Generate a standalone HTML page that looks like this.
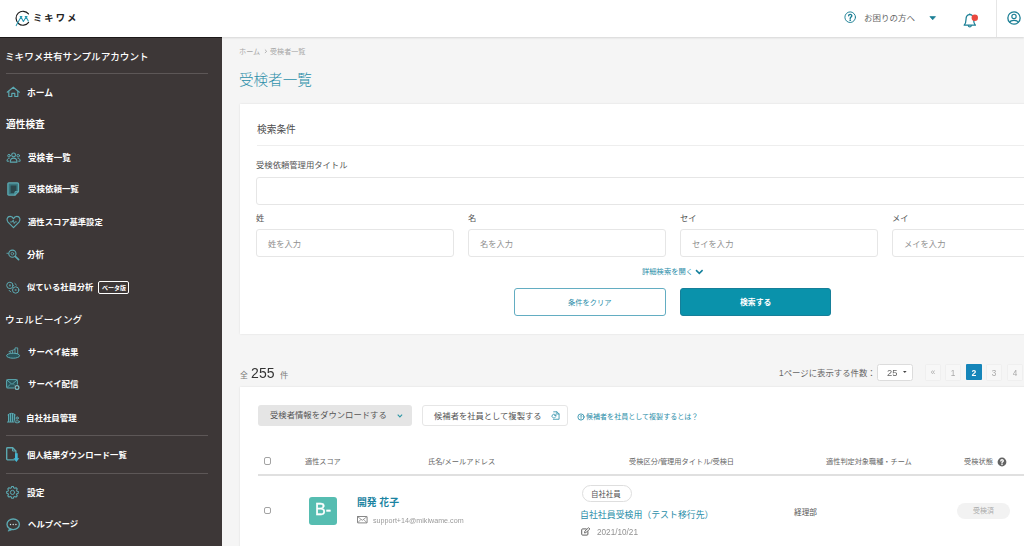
<!DOCTYPE html>
<html lang="ja">
<head>
<meta charset="utf-8">
<title>受検者一覧 | ミキワメ</title>
<style>
html,body{margin:0;padding:0}
body{position:relative;width:1024px;height:546px;overflow:hidden;background:#f5f5f5;font-family:"Liberation Sans","Noto Sans CJK JP",sans-serif;color:#555}
.b,.t,.l,.i{position:absolute;box-sizing:border-box}
.t{display:block;line-height:0;white-space:nowrap}
.t svg{display:block;fill:currentColor;overflow:visible}
.t svg text{font-family:"Liberation Sans","Noto Sans CJK JP",sans-serif;font-size:250px;font-weight:400;stroke:none}
.t svg text.fb{font-weight:700}
.t svg text.fm{font-weight:500}
.t svg text.fl{font-weight:300}
.i{display:block;overflow:visible}
.l{white-space:nowrap;will-change:transform}
header,aside,nav,main,section,ul,li,a,h1,h2,label,button,table,thead,tbody,tr,th,td{all:unset}
.card{background:#fff;box-shadow:0 0 2px rgba(0,0,0,.10)}
.inp{background:#fff;border:1px solid #e6e6e6;border-radius:3px}
.hr{background:#eeeeee}
.cb{background:#fff;border:1px solid #a3a3a3;border-radius:2px}
.pg{background:#f7f7f7;border:1px solid #efefef;border-radius:1.5px}
</style>
</head>
<body>
<header>
<div class="b" style="left:0.00px;top:0.00px;width:1024.00px;height:37.30px;background:#fff;box-shadow:0 1px 2px rgba(0,0,0,.13)"></div>
<a><svg class="i" style="left:0.00px;top:0.00px" width="40.00" height="37.00" viewBox="0 0 40 37"  aria-hidden="true"><path d="M28.62 22.34A6.95 6.95 0 1 1 28.48 13.97" fill="none" stroke="#1d1d1d" stroke-width="1.15" stroke-linecap="round"/><path d="M16.2 25.6L21 16.9L23.4 21.5L26.1 16.9L28.3 21" fill="none" stroke="#2698b2" stroke-width="1.05" stroke-linecap="round" stroke-linejoin="round"/><path d="M19.8 16.6H22.3M24.8 16.6H27.4" fill="none" stroke="#2698b2" stroke-width="1.3"/></svg><span class="t" style="left:32.63px;top:13.44px;color:#222"><svg width="45.47" height="9.32" viewBox="0 -220 1220 250"><text class="fb" x="0" y="0" letter-spacing="55">ミキワメ</text></svg></span></a>
<svg class="i" style="left:842.90px;top:9.80px;color:#1b7f95" width="14.40" height="14.40" viewBox="-7.2 -7.2 14.4 14.4"  aria-hidden="true"><circle r="5.3" fill="none" stroke="currentColor" stroke-width="0.95" stroke-linecap="round" stroke-linejoin="round" /><path d="M-1.55 -1.35C-1.55 -3.35 1.6 -3.35 1.6 -1.4C1.6 -0.2 0 -0.1 0 1.3" fill="none" stroke="currentColor" stroke-width="1.4" stroke-linecap="round" stroke-linejoin="round" /><circle cy="3" r=".85" fill="currentColor"/></svg><svg class="i" style="left:929.00px;top:16.00px;color:#1b7f95" width="8.00" height="5.00" viewBox="0 0 8 5"  aria-hidden="true"><path d="M0.9 0.6H6.5L3.7 3.8Z" fill="currentColor" stroke="currentColor" stroke-width=".7" stroke-linejoin="round"/></svg><svg class="i" style="left:963.00px;top:12.50px;color:#1b7f95" width="14.00" height="16.00" viewBox="0 0 14 16"  aria-hidden="true"><path d="M6.8 1.5C4.2 1.5 3 3.7 3 6.4C3 9.4 2.1 11.1 1.2 12.2H12.4C11.5 11.1 10.6 9.4 10.6 6.4C10.6 3.7 9.4 1.5 6.8 1.5Z" fill="none" stroke="currentColor" stroke-width="1.25" stroke-linecap="round" stroke-linejoin="round" /><path d="M5.3 12.7C5.5 14.3 8.1 14.3 8.3 12.7" fill="none" stroke="currentColor" stroke-width="1.2" stroke-linecap="round" stroke-linejoin="round" /><path d="M6.8 1.5V0.9" fill="none" stroke="currentColor" stroke-width="1.2" stroke-linecap="round" stroke-linejoin="round" /><circle cx="11.8" cy="4.7" r="3.2" fill="#e9483f"/></svg><svg class="i" style="left:1006.30px;top:10.10px;color:#1b7f95" width="16.00" height="16.00" viewBox="-8 -8 16 16"  aria-hidden="true"><circle r="6.15" fill="none" stroke="currentColor" stroke-width="1.3" stroke-linecap="round" stroke-linejoin="round" /><circle cy="-1.6" r="2.15" fill="none" stroke="currentColor" stroke-width="1.15" stroke-linecap="round" stroke-linejoin="round" /><path d="M-4.2 4.3C-3.4 1.7 3.4 1.7 4.2 4.3" fill="none" stroke="currentColor" stroke-width="1.15" stroke-linecap="round" stroke-linejoin="round" /></svg>
<a class="t" style="left:863.72px;top:14.05px;color:#666"><svg width="50.99" height="8.50" viewBox="0 -220 1500 250"><text x="0" y="0">お困りの方へ</text></svg></a>
<div class="b" style="left:996.00px;top:0.00px;width:1.00px;height:37.30px;background:#e6e6e6"></div>
</header>
<aside><nav>
<div class="b" style="left:0.00px;top:37.30px;width:222.00px;height:508.70px;background:#3d3737;border-top:1px solid #1d1919"></div>
<span class="t" style="left:5.28px;top:52.20px;color:#fff"><svg width="144.11" height="9.61" viewBox="0 -220 3750 250"><text class="fm" x="0" y="0">ミキワメ共有サンプルアカウント</text></svg></span>
<div class="b" style="left:6.30px;top:72.80px;width:202.00px;height:1.00px;background:#5d5757"></div>
<a class="t" style="left:27.14px;top:87.60px;color:#fff"><svg width="26.38" height="8.79" viewBox="0 -220 750 250"><text class="fb" x="0" y="0">ホーム</text></svg></a>
<h2 class="t" style="left:6.17px;top:118.94px;color:#fff"><svg width="38.87" height="9.72" viewBox="0 -220 1000 250"><text class="fb" x="0" y="0">適性検査</text></svg></h2>
<a class="t" style="left:27.66px;top:152.71px;color:#fff"><svg width="42.92" height="8.58" viewBox="0 -220 1250 250"><text class="fb" x="0" y="0">受検者一覧</text></svg></a>
<a class="t" style="left:27.66px;top:185.46px;color:#fff"><svg width="50.91" height="8.49" viewBox="0 -220 1500 250"><text class="fb" x="0" y="0">受検依頼一覧</text></svg></a>
<a class="t" style="left:27.80px;top:218.14px;color:#fff"><svg width="74.90" height="8.32" viewBox="0 -220 2250 250"><text class="fb" x="0" y="0">適性スコア基準設定</text></svg></a>
<a class="t" style="left:27.10px;top:250.19px;color:#fff"><svg width="17.24" height="8.62" viewBox="0 -220 500 250"><text class="fb" x="0" y="0">分析</text></svg></a>
<a class="t" style="left:27.13px;top:282.84px;color:#fff"><svg width="66.50" height="8.31" viewBox="0 -220 2000 250"><text class="fb" x="0" y="0">似ている社員分析</text></svg></a>
<div class="b" style="left:98.40px;top:281.40px;width:31.00px;height:12.70px;border:1px solid #fff;border-radius:2px"><span class="t" style="left:2.28px;top:2.40px;color:#fff"><svg width="24.01" height="6.00" viewBox="0 -220 1000 250"><text class="fb" x="0" y="0">ベータ版</text></svg></span></div>
<h2 class="t" style="left:5.20px;top:314.36px;color:#fff"><svg width="77.41" height="9.68" viewBox="0 -220 2000 250"><text class="fm" x="0" y="0">ウェルビーイング</text></svg></h2>
<a class="t" style="left:27.53px;top:348.09px;color:#fff"><svg width="50.47" height="8.41" viewBox="0 -220 1500 250"><text class="fb" x="0" y="0">サーベイ結果</text></svg></a>
<a class="t" style="left:27.53px;top:380.29px;color:#fff"><svg width="50.51" height="8.42" viewBox="0 -220 1500 250"><text class="fb" x="0" y="0">サーベイ配信</text></svg></a>
<a class="t" style="left:25.98px;top:413.56px;color:#fff"><svg width="50.82" height="8.47" viewBox="0 -220 1500 250"><text class="fb" x="0" y="0">自社社員管理</text></svg></a>
<div class="b" style="left:6.30px;top:435.40px;width:202.00px;height:1.00px;background:#5d5757"></div>
<a class="t" style="left:27.13px;top:450.84px;color:#fff"><svg width="99.93" height="8.33" viewBox="0 -220 3000 250"><text class="fb" x="0" y="0">個人結果ダウンロード一覧</text></svg></a>
<div class="b" style="left:6.30px;top:473.00px;width:202.00px;height:1.00px;background:#5d5757"></div>
<a class="t" style="left:26.92px;top:487.53px;color:#fff"><svg width="17.49" height="8.75" viewBox="0 -220 500 250"><text class="fb" x="0" y="0">設定</text></svg></a>
<a class="t" style="left:27.63px;top:520.29px;color:#fff"><svg width="50.51" height="8.42" viewBox="0 -220 1500 250"><text class="fb" x="0" y="0">ヘルプページ</text></svg></a>
<svg class="i" style="left:6.00px;top:86.00px;color:#5caab3" width="15.00" height="12.00" viewBox="0 0 15 12"  aria-hidden="true"><path d="M1.2 6.2 L7.3 1.2 L13.4 6.2" fill="none" stroke="currentColor" stroke-width="1.15" stroke-linecap="round" stroke-linejoin="round" /><path d="M2.8 5.4V10.5H5.8V7.4H8.8V10.5H11.8V5.4" fill="none" stroke="currentColor" stroke-width="1.15" stroke-linecap="round" stroke-linejoin="round" /></svg><svg class="i" style="left:5.50px;top:151.50px;color:#5caab3" width="16.00" height="11.00" viewBox="0 0 16 11"  aria-hidden="true"><circle cx="7.6" cy="2.9" r="1.9" fill="none" stroke="currentColor" stroke-width="1.1" stroke-linecap="round" stroke-linejoin="round" /><path d="M4.2 10.1C4.2 7.4 5.5 6.1 7.6 6.1C9.7 6.1 11 7.4 11 10.1Z" fill="none" stroke="currentColor" stroke-width="1.1" stroke-linecap="round" stroke-linejoin="round" /><circle cx="3" cy="3.7" r="1.3" fill="none" stroke="currentColor" stroke-width="1" stroke-linecap="round" stroke-linejoin="round" /><circle cx="12.2" cy="3.7" r="1.3" fill="none" stroke="currentColor" stroke-width="1" stroke-linecap="round" stroke-linejoin="round" /><path d="M2.6 9.2H1C1 7.3 1.7 6.4 3.2 6.3" fill="none" stroke="currentColor" stroke-width="1" stroke-linecap="round" stroke-linejoin="round" /><path d="M12.6 9.2H14.2C14.2 7.3 13.5 6.4 12 6.3" fill="none" stroke="currentColor" stroke-width="1" stroke-linecap="round" stroke-linejoin="round" /></svg><svg class="i" style="left:7.00px;top:181.90px;color:#5caab3" width="12.50" height="14.00" viewBox="0 0 12.5 14"  aria-hidden="true"><path d="M1.8 0.9H10.3Q11.5 0.9 11.5 2.1V9.6L8 13.1H1.8Q0.9 13.1 0.9 12.2V1.8Q0.9 0.9 1.8 0.9Z" fill="#3a757d" stroke="currentColor" stroke-width="1.3" stroke-linejoin="round"/><path d="M3.6 3.4H9.4V9L7.3 11.1H3.6Z" fill="#2b464b"/><path d="M8 13V9.7H11.4" fill="none" stroke="currentColor" stroke-width="1.0" stroke-linecap="round" stroke-linejoin="round" /></svg><svg class="i" style="left:5.50px;top:215.00px;color:#5caab3" width="15.00" height="14.00" viewBox="0 0 15 14"  aria-hidden="true"><path d="M7.5 12.6L2 7.1C-0.1 4.7 1.3 1.4 4.1 1.4C5.6 1.4 6.9 2.3 7.5 3.7C8.1 2.3 9.4 1.4 10.9 1.4C13.7 1.4 15.1 4.7 13 7.1Z" fill="none" stroke="currentColor" stroke-width="1.2" stroke-linecap="round" stroke-linejoin="round" /><path d="M4.6 6.9H6.3L7.2 5.1L8.2 8.5L9 6.9H10.4" fill="none" stroke="currentColor" stroke-width="0.9" stroke-linecap="round" stroke-linejoin="round" /></svg><svg class="i" style="left:6.00px;top:248.50px;color:#5caab3" width="14.00" height="12.00" viewBox="0 0 14 12"  aria-hidden="true"><circle cx="6.4" cy="4.7" r="3.6" fill="none" stroke="currentColor" stroke-width="1.05" stroke-linecap="round" stroke-linejoin="round" /><circle cx="6.4" cy="4.7" r="1.3" fill="none" stroke="currentColor" stroke-width="0.8" stroke-linecap="round" stroke-linejoin="round" /><path d="M9.2 7.4L12.6 10.7" fill="none" stroke="currentColor" stroke-width="1.7" stroke-linecap="round" stroke-linejoin="round" /><path d="M0.9 4.3H2.3" fill="none" stroke="currentColor" stroke-width="0.9" stroke-linecap="round" stroke-linejoin="round" /></svg><svg class="i" style="left:6.00px;top:280.50px;color:#5caab3" width="14.00" height="13.00" viewBox="0 0 14 13"  aria-hidden="true"><circle cx="3.9" cy="4.4" r="3.2" fill="none" stroke="currentColor" stroke-width="1" stroke-linecap="round" stroke-linejoin="round" /><circle cx="9.7" cy="9" r="3.2" fill="none" stroke="currentColor" stroke-width="1" stroke-linecap="round" stroke-linejoin="round" /><circle cx="3.9" cy="4.4" r="1.1" fill="currentColor" opacity=".7"/><circle cx="9.7" cy="9" r="1.1" fill="currentColor" opacity=".7"/><path d="M8.9 2.5L10.4 4" fill="none" stroke="currentColor" stroke-width="1" stroke-linecap="round" stroke-linejoin="round" /><path d="M3.2 9.4L4.7 10.9" fill="none" stroke="currentColor" stroke-width="1" stroke-linecap="round" stroke-linejoin="round" /></svg><svg class="i" style="left:6.00px;top:346.50px;color:#5caab3" width="14.50" height="12.00" viewBox="0 0 14.5 12"  aria-hidden="true"><ellipse cx="7.1" cy="8.7" rx="6.5" ry="2.5" fill="#2a5258" stroke="currentColor" stroke-width="1"/><rect x="9.4" y="0.9" width="2.3" height="5.6" fill="none" stroke="currentColor" stroke-width="0.9" stroke-linecap="round" stroke-linejoin="round" /><path d="M3.1 4.6L8.6 2.6" fill="none" stroke="currentColor" stroke-width="0.9" stroke-linecap="round" stroke-linejoin="round" /><path d="M4.2 6V5M6.6 6V4.2" fill="none" stroke="currentColor" stroke-width="0.9" stroke-linecap="round" stroke-linejoin="round" /></svg><svg class="i" style="left:5.50px;top:379.00px;color:#5caab3" width="14.00" height="12.00" viewBox="0 0 14 12"  aria-hidden="true"><rect x="0.6" y="0.6" width="10.8" height="8.4" rx="0.9" fill="#2a5258" stroke="currentColor" stroke-width="1"/><path d="M1 1.1L6 5.3L11 1.1" fill="none" stroke="currentColor" stroke-width="0.9" stroke-linecap="round" stroke-linejoin="round" /><path d="M1 8.5L4.3 5.4M11 8.5L7.7 5.4" fill="none" stroke="currentColor" stroke-width="0.8" stroke-linecap="round" stroke-linejoin="round" /><circle cx="11" cy="8.5" r="3" fill="#3d3737"/><circle cx="11" cy="8.5" r="1.9" fill="none" stroke="#7cc2ca" stroke-width="1.2"/></svg><svg class="i" style="left:6.50px;top:411.50px;color:#5caab3" width="13.50" height="11.00" viewBox="0 0 13.5 11"  aria-hidden="true"><path d="M1 9.6V2.6Q4.6 -0.4 8.2 2.6V9.6Z" fill="#2a5258" stroke="none"/><path d="M1 2.7Q4.6 -0.3 8.2 2.7" fill="none" stroke="currentColor" stroke-width="1" stroke-linecap="round" stroke-linejoin="round" /><path d="M1.6 2.8V9.4M3.6 2V9.4M5.6 2V9.4M7.6 2.8V9.4" fill="none" stroke="currentColor" stroke-width="1.15" stroke-linecap="round" stroke-linejoin="round" /><path d="M0.5 10H8" fill="none" stroke="currentColor" stroke-width="1.2" stroke-linecap="round" stroke-linejoin="round" /><circle cx="10.2" cy="6.1" r="1.9" fill="#3d3737"/><ellipse cx="10.2" cy="9.8" rx="3.1" ry="1.9" fill="#3d3737"/><circle cx="10.2" cy="6.1" r="1.15" fill="none" stroke="currentColor" stroke-width="1" stroke-linecap="round" stroke-linejoin="round" /><ellipse cx="10.2" cy="9.8" rx="2.3" ry="1.05" fill="none" stroke="currentColor" stroke-width="1" stroke-linecap="round" stroke-linejoin="round" /></svg><svg class="i" style="left:6.00px;top:447.00px;color:#5caab3" width="13.50" height="15.50" viewBox="0 0 13.5 15.5"  aria-hidden="true"><path d="M8 12.9H1.5Q0.7 12.9 0.7 12.1V1.5Q0.7 0.7 1.5 0.7H6.7L9.9 3.9V6.4" fill="none" stroke="currentColor" stroke-width="1.35" stroke-linecap="round" stroke-linejoin="round" /><path d="M6.6 0.9V4H9.7" fill="none" stroke="currentColor" stroke-width="1" stroke-linecap="round" stroke-linejoin="round" /><path d="M9 6.3H11.7V11.2H13.3L10.35 15L7.4 11.2H9Z" fill="#43b7d4"/></svg><svg class="i" style="left:6.00px;top:485.50px;color:#5caab3" width="13.00" height="13.00" viewBox="0 0 13 13"  aria-hidden="true"><path d="M5.58 0.57L7.42 0.57L7.67 1.85L8.89 2.35L9.97 1.63L11.27 2.93L10.55 4.01L11.05 5.23L12.33 5.48L12.33 7.32L11.05 7.57L10.55 8.79L11.27 9.87L9.97 11.17L8.89 10.45L7.67 10.95L7.42 12.23L5.58 12.23L5.33 10.95L4.11 10.45L3.03 11.17L1.73 9.87L2.45 8.79L1.95 7.57L0.67 7.32L0.67 5.48L1.95 5.23L2.45 4.01L1.73 2.93L3.03 1.63L4.11 2.35L5.33 1.85Z" fill="none" stroke="currentColor" stroke-width="1.05" stroke-linecap="round" stroke-linejoin="round" /><circle cx="6.5" cy="6.4" r="2.1" fill="none" stroke="currentColor" stroke-width="1" stroke-linecap="round" stroke-linejoin="round" /></svg><svg class="i" style="left:6.00px;top:517.50px;color:#5caab3" width="14.50" height="14.00" viewBox="0 0 14.5 14"  aria-hidden="true"><path d="M3.6 10.4L2 13.2L6.4 11.7Z" fill="currentColor" stroke="currentColor" stroke-width=".6" stroke-linejoin="round"/><ellipse cx="7.2" cy="6.3" rx="6.2" ry="5.3" fill="none" stroke="currentColor" stroke-width="1.35" stroke-linecap="round" stroke-linejoin="round" /><circle cx="4.5" cy="6.5" r=".7" fill="#d5e9eb"/><circle cx="7.2" cy="6.5" r=".7" fill="#d5e9eb"/><circle cx="9.9" cy="6.5" r=".7" fill="#d5e9eb"/></svg>
</nav></aside>
<main>
<a class="t" style="left:239.43px;top:47.82px;color:#a6a6a6"><svg width="21.45" height="7.15" viewBox="0 -220 750 250"><text x="0" y="0">ホーム</text></svg></a>
<svg class="i" style="left:264.20px;top:49.40px;color:#a6a6a6" width="3.60" height="4.60" viewBox="0 0 3.6 4.6"  aria-hidden="true"><path d="M0.9 0.6L2.7 2.3L0.9 4" fill="none" stroke="currentColor" stroke-width=".85"/></svg>
<span class="t" style="left:269.63px;top:47.85px;color:#a6a6a6"><svg width="35.50" height="7.10" viewBox="0 -220 1250 250"><text x="0" y="0">受検者一覧</text></svg></span>
<h1 class="t" style="left:238.93px;top:72.32px;color:#2a8ea9"><svg width="72.83" height="14.57" viewBox="0 -220 1250 250"><text class="fl" x="0" y="0">受検者一覧</text></svg></h1>
<section>
<div class="b card" style="left:240.00px;top:103.80px;width:800.00px;height:229.80px;"></div>
<h2 class="t" style="left:256.89px;top:123.54px;color:#4d4d4d"><svg width="38.88" height="9.72" viewBox="0 -220 1000 250"><text x="0" y="0">検索条件</text></svg></h2>
<div class="b hr" style="left:257.00px;top:145.00px;width:783.00px;height:1.00px;"></div>
<label class="t" style="left:255.57px;top:160.93px;color:#555"><svg width="91.63" height="8.33" viewBox="0 -220 2750 250"><text x="0" y="0">受検依頼管理用タイトル</text></svg></label>
<div class="b inp" style="left:256.00px;top:176.50px;width:834.00px;height:28.10px;"></div>
<label class="t" style="left:255.97px;top:214.15px;color:#555"><svg width="8.30" height="8.30" viewBox="0 -220 250 250"><text x="0" y="0">姓</text></svg></label>
<div class="b inp" style="left:256.00px;top:229.30px;width:197.70px;height:28.10px;"><span class="t" style="left:10.97px;top:9.45px;color:#8f8f8f"><svg width="33.20" height="8.30" viewBox="0 -220 1000 250"><text x="0" y="0">姓を入力</text></svg></span></div>
<label class="t" style="left:468.13px;top:214.15px;color:#555"><svg width="8.30" height="8.30" viewBox="0 -220 250 250"><text x="0" y="0">名</text></svg></label>
<div class="b inp" style="left:468.10px;top:229.30px;width:197.70px;height:28.10px;"><span class="t" style="left:11.03px;top:9.45px;color:#8f8f8f"><svg width="33.20" height="8.30" viewBox="0 -220 1000 250"><text x="0" y="0">名を入力</text></svg></span></div>
<label class="t" style="left:680.00px;top:214.15px;color:#555"><svg width="16.60" height="8.30" viewBox="0 -220 500 250"><text x="0" y="0">セイ</text></svg></label>
<div class="b inp" style="left:680.20px;top:229.30px;width:197.70px;height:28.10px;"><span class="t" style="left:10.80px;top:9.45px;color:#8f8f8f"><svg width="41.50" height="8.30" viewBox="0 -220 1250 250"><text x="0" y="0">セイを入力</text></svg></span></div>
<label class="t" style="left:891.67px;top:214.15px;color:#555"><svg width="16.60" height="8.30" viewBox="0 -220 500 250"><text x="0" y="0">メイ</text></svg></label>
<div class="b inp" style="left:892.30px;top:229.30px;width:197.70px;height:28.10px;"><span class="t" style="left:10.37px;top:9.45px;color:#8f8f8f"><svg width="41.50" height="8.30" viewBox="0 -220 1250 250"><text x="0" y="0">メイを入力</text></svg></span></div>
<a class="t" style="left:642.21px;top:268.34px;color:#2a8ea9"><svg width="51.18" height="7.31" viewBox="0 -220 1750 250"><text x="0" y="0">詳細検索を開く</text></svg></a>
<svg class="i" style="left:694.60px;top:269.20px;color:#14809c" width="8.60" height="5.80" viewBox="0 0 8.6 5.8"  aria-hidden="true"><path d="M1 1.1 L4.3 4.4 L7.6 1.1" fill="none" stroke="currentColor" stroke-width="1.5"/></svg>
<button class="b" style="left:514.40px;top:287.90px;width:151.20px;height:28.10px;background:#fff;border:1px solid #63adc2;border-radius:3px"><span class="t" style="left:52.34px;top:9.85px;color:#2a8ea9"><svg width="43.76" height="7.29" viewBox="0 -220 1500 250"><text x="0" y="0">条件をクリア</text></svg></span></button>
<button class="b" style="left:680.00px;top:287.90px;width:151.00px;height:28.10px;background:#0a92ab;border:1px solid #167f99;border-radius:3px"><span class="t" style="left:58.91px;top:9.47px;color:#fff"><svg width="31.43" height="7.86" viewBox="0 -220 1000 250"><text class="fb" x="0" y="0">検索する</text></svg></span></button>
</section>
<span class="t" style="left:239.82px;top:370.88px;color:#7a7a7a"><svg width="7.83" height="7.83" viewBox="0 -220 250 250"><text x="0" y="0">全</text></svg></span>
<span class="l" style="top:364.80px;font-size:14.00px;line-height:16.80px;color:#333;letter-spacing:0.12px;left:251.30px">255</span>
<span class="t" style="left:279.63px;top:370.72px;color:#7a7a7a"><svg width="8.37" height="8.37" viewBox="0 -220 250 250"><text x="0" y="0">件</text></svg></span>
<label class="t" style="left:778.66px;top:369.10px;color:#666"><svg width="97.10" height="8.40" viewBox="0 -220 2888.8 250"><text x="0" y="0">1ページに表示する件数：</text></svg></label>
<div class="b" style="left:877.40px;top:363.90px;width:35.20px;height:17.40px;background:#fff;border:1px solid #dcdcdc;border-radius:2.5px"><span class="l" style="top:3.42px;font-size:9.30px;line-height:11.16px;color:#666;left:8.20px">25</span><svg class="i" style="left:24.50px;top:6.50px" width="3.60" height="2.00" viewBox="0 0 3.6 2"  aria-hidden="true"><path d="M0 0h3.6L1.8 2z" fill="#444"/></svg></div>
<nav>
<a class="b pg" style="left:924.80px;top:364.40px;width:16.30px;height:16.30px;"><span class="l" style="top:3.08px;font-size:8.20px;line-height:9.84px;color:#a8a8a8;left:7.15px;transform:translateX(-50%)">«</span></a>
<a class="b pg" style="left:945.20px;top:364.40px;width:16.30px;height:16.30px;"><span class="l" style="top:3.18px;font-size:8.20px;line-height:9.84px;color:#a8a8a8;left:7.15px;transform:translateX(-50%)">1</span></a>
<a class="b" style="left:965.50px;top:364.40px;width:16.70px;height:16.00px;background:#1585b9;border-radius:1px"><span class="l" style="top:3.54px;font-size:8.60px;line-height:10.32px;color:#fff;font-weight:700;left:8.25px;transform:translateX(-50%)">2</span></a>
<a class="b pg" style="left:986.00px;top:364.40px;width:16.30px;height:16.30px;"><span class="l" style="top:3.18px;font-size:8.20px;line-height:9.84px;color:#a8a8a8;left:7.15px;transform:translateX(-50%)">3</span></a>
<a class="b pg" style="left:1006.50px;top:364.40px;width:16.30px;height:16.30px;"><span class="l" style="top:3.18px;font-size:8.20px;line-height:9.84px;color:#a8a8a8;left:7.15px;transform:translateX(-50%)">4</span></a>
</nav>
<section>
<div class="b card" style="left:240.00px;top:387.20px;width:800.00px;height:170.00px;"></div>
<button class="b" style="left:258.00px;top:405.20px;width:154.00px;height:21.10px;background:#e5e5e5;border-radius:3px"><span class="t" style="left:11.87px;top:6.02px;color:#555"><svg width="117.04" height="8.36" viewBox="0 -220 3500 250"><text x="0" y="0">受検者情報をダウンロードする</text></svg></span><svg class="i" style="left:139.00px;top:8.40px;color:#2f97a6" width="5.80" height="3.80" viewBox="0 0 5.8 3.8"  aria-hidden="true"><path d="M0.7 0.7 L2.9 2.9 L5.1 0.7" fill="none" stroke="currentColor" stroke-width="1.1"/></svg></button>
<button class="b" style="left:421.80px;top:405.20px;width:146.60px;height:21.10px;background:#fff;border:1px solid #e6e6e6;border-radius:3px"><span class="t" style="left:11.57px;top:5.55px;color:#555"><svg width="108.03" height="8.31" viewBox="0 -220 3250 250"><text x="0" y="0">候補者を社員として複製する</text></svg></span><svg class="i" style="left:127.10px;top:4.80px;color:#2a8ea9" width="11.00" height="9.63" viewBox="0 0 12 10.5"  aria-hidden="true"><path d="M4 0.9H7.6L9.9 3.2V9H3.6" fill="none" stroke="currentColor" stroke-width="0.9" stroke-linecap="round" stroke-linejoin="round" /><path d="M7.5 1V3.3H9.8" fill="none" stroke="currentColor" stroke-width="0.8" stroke-linecap="round" stroke-linejoin="round" /><circle cx="4.3" cy="5.5" r="2.9" fill="#fff"/><path d="M6.2 4.6A2.1 2.1 0 1 0 6.3 6.3" fill="none" stroke="currentColor" stroke-width="0.9" stroke-linecap="round" stroke-linejoin="round" /><path d="M6.6 3.3V4.9H5" fill="none" stroke="currentColor" stroke-width="0.8" stroke-linecap="round" stroke-linejoin="round" /></svg></button>
<a><svg class="i" style="left:576.90px;top:412.90px;color:#2a8ea9" width="8.00" height="8.00" viewBox="-4 -4 8 8"  aria-hidden="true"><circle r="3.1" fill="none" stroke="currentColor" stroke-width="0.85" stroke-linecap="round" stroke-linejoin="round" /><path transform="scale(.55)" d="M-1.55 -1.35C-1.55 -3.35 1.6 -3.35 1.6 -1.4C1.6 -0.2 0 -0.1 0 1.3" fill="none" stroke="currentColor" stroke-width="1.5" stroke-linecap="round" stroke-linejoin="round" /><circle cy="1.75" r=".5" fill="currentColor"/></svg><span class="t" style="left:586.39px;top:413.08px;color:#2a8ea9"><svg width="112.80" height="7.05" viewBox="0 -220 4000 250"><text x="0" y="0">候補者を社員として複製するとは？</text></svg></span></a>
<div class="b cb" style="left:263.60px;top:457.30px;width:7.80px;height:7.80px;"></div>
<span class="t" style="left:305.14px;top:458.22px;color:#666"><svg width="35.85" height="7.17" viewBox="0 -220 1250 250"><text x="0" y="0">適性スコア</text></svg></span>
<span class="t" style="left:428.09px;top:458.17px;color:#666"><svg width="68.13" height="7.25" viewBox="0 -220 2348 250"><text x="0" y="0">氏名/メールアドレス</text></svg></span>
<span class="t" style="left:628.52px;top:458.28px;color:#666"><svg width="106.99" height="7.24" viewBox="0 -220 3696 250"><text x="0" y="0">受検区分/管理用タイトル/受検日</text></svg></span>
<span class="t" style="left:826.24px;top:458.21px;color:#666"><svg width="86.22" height="7.18" viewBox="0 -220 3000 250"><text x="0" y="0">適性判定対象職種・チーム</text></svg></span>
<span class="t" style="left:963.72px;top:458.28px;color:#666"><svg width="28.97" height="7.24" viewBox="0 -220 1000 250"><text x="0" y="0">受検状態</text></svg></span>
<svg class="i" style="left:997.20px;top:457.40px" width="10.00" height="10.00" viewBox="-5 -5 10 10"  aria-hidden="true"><circle r="4.4" fill="#636363"/><path transform="scale(.78)" d="M-1.55 -1.35C-1.55 -3.35 1.6 -3.35 1.6 -1.4C1.6 -0.2 0 -0.1 0 1.3" fill="none" stroke="#fff" stroke-width="1.7" stroke-linecap="round" stroke-linejoin="round"/><circle cy="2.5" r=".75" fill="#fff"/></svg>
<div class="b" style="left:257.60px;top:474.30px;width:783.00px;height:1.50px;background:#e0e0e0"></div>
<div class="b cb" style="left:263.60px;top:506.60px;width:7.80px;height:7.80px;"></div>
<div class="b" style="left:308.90px;top:497.00px;width:27.90px;height:27.90px;background:#56bdb1;border-radius:3px"><span class="l" style="top:3.88px;font-size:15.70px;line-height:18.84px;color:#fff;left:14.05px;transform:translateX(-50%);transform:translateX(-50%) scaleX(1.03);-webkit-text-stroke:.3px #fff">B-</span></div>
<a class="t" style="left:356.81px;top:497.08px;color:#1c84a2"><svg width="41.58" height="9.84" viewBox="0 -220 1056.8 250"><text class="fb" x="0" y="0">開発 花子</text></svg></a>
<svg class="i" style="left:356.80px;top:515.80px;color:#7a7a7a" width="11.00" height="8.00" viewBox="0 0 11 8"  aria-hidden="true"><rect x="0.5" y="0.5" width="9.6" height="6.4" rx=".4" fill="none" stroke="currentColor" stroke-width="0.9" stroke-linecap="round" stroke-linejoin="round" /><path d="M0.8 0.8L5.3 4.3L9.8 0.8M0.8 6.6L3.9 3.5M9.8 6.6L6.7 3.5" fill="none" stroke="currentColor" stroke-width="0.7" stroke-linecap="round" stroke-linejoin="round" /></svg>
<span class="l" style="top:516.50px;font-size:7.17px;line-height:8.60px;color:#9a9a9a;left:372.60px">support+14@mikiwame.com</span>
<div class="b" style="left:581.80px;top:485.10px;width:50.00px;height:16.80px;background:#fff;border:1px solid #dedede;border-radius:9px"><span class="t" style="left:8.28px;top:3.77px;color:#555"><svg width="29.82" height="7.46" viewBox="0 -220 1000 250"><text x="0" y="0">自社社員</text></svg></span></div>
<a class="t" style="left:580.44px;top:510.34px;color:#2a8ea9"><svg width="133.77" height="8.92" viewBox="0 -220 3750 250"><text x="0" y="0">自社社員受検用（テスト移行先）</text></svg></a>
<svg class="i" style="left:581.00px;top:527.00px;color:#5a5a5a" width="10.00" height="9.00" viewBox="0 0 10 9"  aria-hidden="true"><path d="M5.2 1.9H1.6Q0.7 1.9 0.7 2.8V7.2Q0.7 8.1 1.6 8.1H6Q6.9 8.1 6.9 7.2V4.6" fill="none" stroke="currentColor" stroke-width="0.95" stroke-linecap="round" stroke-linejoin="round" /><path d="M3.6 5.6L3.9 4.1L7.6 0.7L8.9 2L5.2 5.3Z" fill="none" stroke="currentColor" stroke-width="0.85" stroke-linecap="round" stroke-linejoin="round" /></svg>
<span class="l" style="top:528.48px;font-size:8.20px;line-height:9.84px;color:#929292;left:597.00px">2021/10/21</span>
<span class="t" style="left:793.52px;top:507.85px;color:#555"><svg width="23.09" height="7.70" viewBox="0 -220 750 250"><text x="0" y="0">経理部</text></svg></span>
<div class="b" style="left:957.00px;top:503.00px;width:53.30px;height:15.90px;background:#f2f2f2;border-radius:8px"><span class="t" style="left:16.23px;top:4.37px;color:#aaa"><svg width="21.19" height="7.06" viewBox="0 -220 750 250"><text x="0" y="0">受検済</text></svg></span></div>
</section>
</main>
</body>
</html>
